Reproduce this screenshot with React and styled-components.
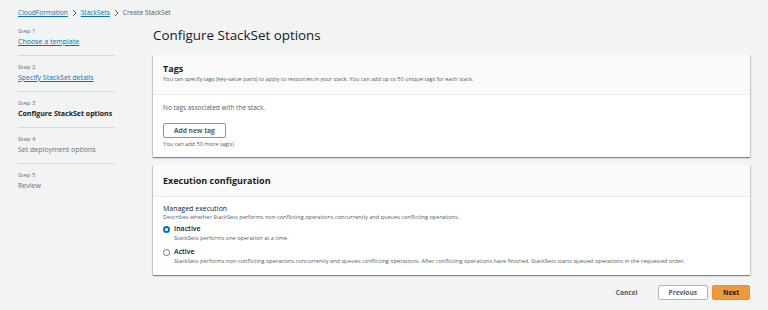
import React, { useState } from "react";
import styled, { createGlobalStyle } from "styled-components";

const GlobalStyle = createGlobalStyle`
	body {
		margin: 0;
		background: #f2f3f3;
		font-family: "Open Sans", "Noto Sans", sans-serif;
		color: #16191f;
	}
`;

const steps = [
	{ n: 1, label: "Choose a template", state: "link" },
	{ n: 2, label: "Specify StackSet details", state: "link" },
	{ n: 3, label: "Configure StackSet options", state: "active" },
	{ n: 4, label: "Set deployment options", state: "todo" },
	{ n: 5, label: "Review", state: "todo" },
];

export default function App() {
	const [mode, setMode] = useState("inactive");
	return (
		<Page>
			<GlobalStyle />
			<Crumbs>
				<CrumbLink>CloudFormation</CrumbLink>
				<Chevron />
				<CrumbLink>StackSets</CrumbLink>
				<Chevron />
				<span>Create StackSet</span>
			</Crumbs>
			<Layout>
				<Nav>
					{steps.map((s, i) => (
						<Step key={s.n} last={i === steps.length - 1}>
							<StepNum>Step {s.n}</StepNum>
							<StepLabel state={s.state}>{s.label}</StepLabel>
						</Step>
					))}
				</Nav>
				<Main>
					<Title>Configure StackSet options</Title>
					<Card>
						<CardHead>
							<CardTitle>Tags</CardTitle>
							<CardDesc>
								You can specify tags (key-value pairs) to apply to resources in your
								stack. You can add up to 50 unique tags for each stack.
							</CardDesc>
						</CardHead>
						<TagsBody>
							<Muted>No tags associated with the stack.</Muted>
							<GhostButton>Add new tag</GhostButton>
							<Hint>You can add 50 more tag(s)</Hint>
						</TagsBody>
					</Card>
					<Card>
						<CardHead tall>
							<CardTitle>Execution configuration</CardTitle>
						</CardHead>
						<ExecBody>
							<FieldLabel>Managed execution</FieldLabel>
							<Hint>
								Describes whether StackSets performs non-conflicting operations
								concurrently and queues conflicting operations.
							</Hint>
							<RadioGroup>
								<Radio onClick={() => setMode("inactive")}>
									<Dot checked={mode === "inactive"} />
									<div>
										<RadioLabel>Inactive</RadioLabel>
										<Hint>StackSets performs one operation at a time.</Hint>
									</div>
								</Radio>
								<Radio onClick={() => setMode("active")}>
									<Dot checked={mode === "active"} />
									<div>
										<RadioLabel>Active</RadioLabel>
										<Hint>
											StackSets performs non-conflicting operations concurrently and
											queues conflicting operations. After conflicting operations have
											finished, StackSets starts queued operations in the requested
											order.
										</Hint>
									</div>
								</Radio>
							</RadioGroup>
						</ExecBody>
					</Card>
					<Actions>
						<TextButton>Cancel</TextButton>
						<OutlineButton>Previous</OutlineButton>
						<PrimaryButton>Next</PrimaryButton>
					</Actions>
				</Main>
			</Layout>
		</Page>
	);
}

function Chevron() {
	return (
		<svg width="5" height="8" viewBox="0 0 5 8">
			<path d="M1 1 L4 4 L1 7" fill="none" stroke="#545b64" strokeWidth="1" />
		</svg>
	);
}

const Page = styled.div`
	padding: 8px 18px 0 18px;
	width: 768px;
	height: 310px;
	box-sizing: border-box;
	overflow: hidden;
`;
const Crumbs = styled.div`
	display: flex;
	align-items: center;
	gap: 4px;
	font-size: 6.6px;
	color: #545b64;
	height: 9px;
`;
const CrumbLink = styled.a`
	color: #0073bb;
	text-decoration: underline;
	text-underline-offset: 1px;
`;
const Layout = styled.div`
	display: flex;
	gap: 38px;
	margin-top: 9px;
`;
const Nav = styled.div`
	width: 97px;
	flex-shrink: 0;
`;
const Step = styled.div`
	padding-bottom: 8px;
	margin-bottom: 6px;
	border-bottom: ${(p) => (p.last ? "none" : "1px solid #d5dbdb")};
`;
const StepNum = styled.div`
	font-size: 6px;
	color: #687078;
	line-height: 10px;
`;
const StepLabel = styled.div`
	font-size: 7px;
	line-height: 11px;
	color: ${(p) => (p.state === "link" ? "#0073bb" : p.state === "active" ? "#16191f" : "#687078")};
	font-weight: ${(p) => (p.state === "active" ? 700 : 400)};
	text-decoration: ${(p) => (p.state === "link" ? "underline" : "none")};
`;
const Main = styled.div`
	flex: 1;
	min-width: 0;
	display: flex;
	flex-direction: column;
	gap: 8px;
`;
const Title = styled.h1`
	margin: 0 0 2px;
	font-size: 13.4px;
	font-weight: 400;
	line-height: 19px;
	color: #16191f;
`;
const Card = styled.div`
	background: #fff;
	box-shadow: 0 1px 1px 0 rgba(0, 28, 36, 0.3), 1px 1px 1px 0 rgba(0, 28, 36, 0.15),
		-1px 1px 1px 0 rgba(0, 28, 36, 0.15);
`;
const CardHead = styled.div`
	background: #fafafa;
	border-bottom: 1px solid #eaeded;
	padding: ${(p) => (p.tall ? "10px 10px 9px" : "8px 10px 10px")};
`;
const CardTitle = styled.div`
	font-size: 9px;
	font-weight: 700;
	line-height: 12px;
`;
const CardDesc = styled.div`
	font-size: 5.5px;
	color: #545b64;
	line-height: 9px;
`;
const TagsBody = styled.div`
	padding: 8px 10px 8px;
`;
const ExecBody = styled.div`
	padding: 7px 10px 9px;
`;
const Muted = styled.div`
	font-size: 6.5px;
	color: #545b64;
	line-height: 9px;
	margin-bottom: 11px;
`;
const Hint = styled.div`
	font-size: 5.6px;
	color: #545b64;
	line-height: 9px;
`;
const FieldLabel = styled.div`
	font-size: 7px;
	line-height: 9px;
`;
const RadioGroup = styled.div`
	display: flex;
	flex-direction: column;
	gap: 4px;
	margin-top: 2px;
`;
const Radio = styled.div`
	display: flex;
	gap: 4px;
	cursor: pointer;
`;
const Dot = styled.span`
	width: 7px;
	height: 7px;
	margin-top: 1.5px;
	border-radius: 50%;
	box-sizing: border-box;
	flex-shrink: 0;
	border: ${(p) => (p.checked ? "2px solid #0073bb" : "1px solid #687078")};
	background: #fff;
`;
const RadioLabel = styled.div`
	font-size: 7px;
	font-weight: 600;
	line-height: 10px;
`;
const Actions = styled.div`
	display: flex;
	justify-content: flex-end;
	align-items: center;
	gap: 4px;
	margin-top: 2px;
`;
const ButtonBase = styled.button`
	font-family: inherit;
	font-size: 6.6px;
	font-weight: 700;
	height: 15px;
	padding: 0 10px;
	border-radius: 2px;
	cursor: pointer;
`;
const GhostButton = styled(ButtonBase)`
	display: block;
	background: #fff;
	border: 1px solid #8d9496;
	color: #545b64;
	margin-bottom: 2px;
`;
const OutlineButton = styled(GhostButton)`
	border-color: #aab7b8;
	margin-bottom: 0;
`;
const TextButton = styled(ButtonBase)`
	background: none;
	border: none;
	color: #545b64;
	margin-right: 6px;
`;
const PrimaryButton = styled(ButtonBase)`
	background: #f0993a;
	border: 1px solid #eb8f2c;
	color: #16191f;
`;
